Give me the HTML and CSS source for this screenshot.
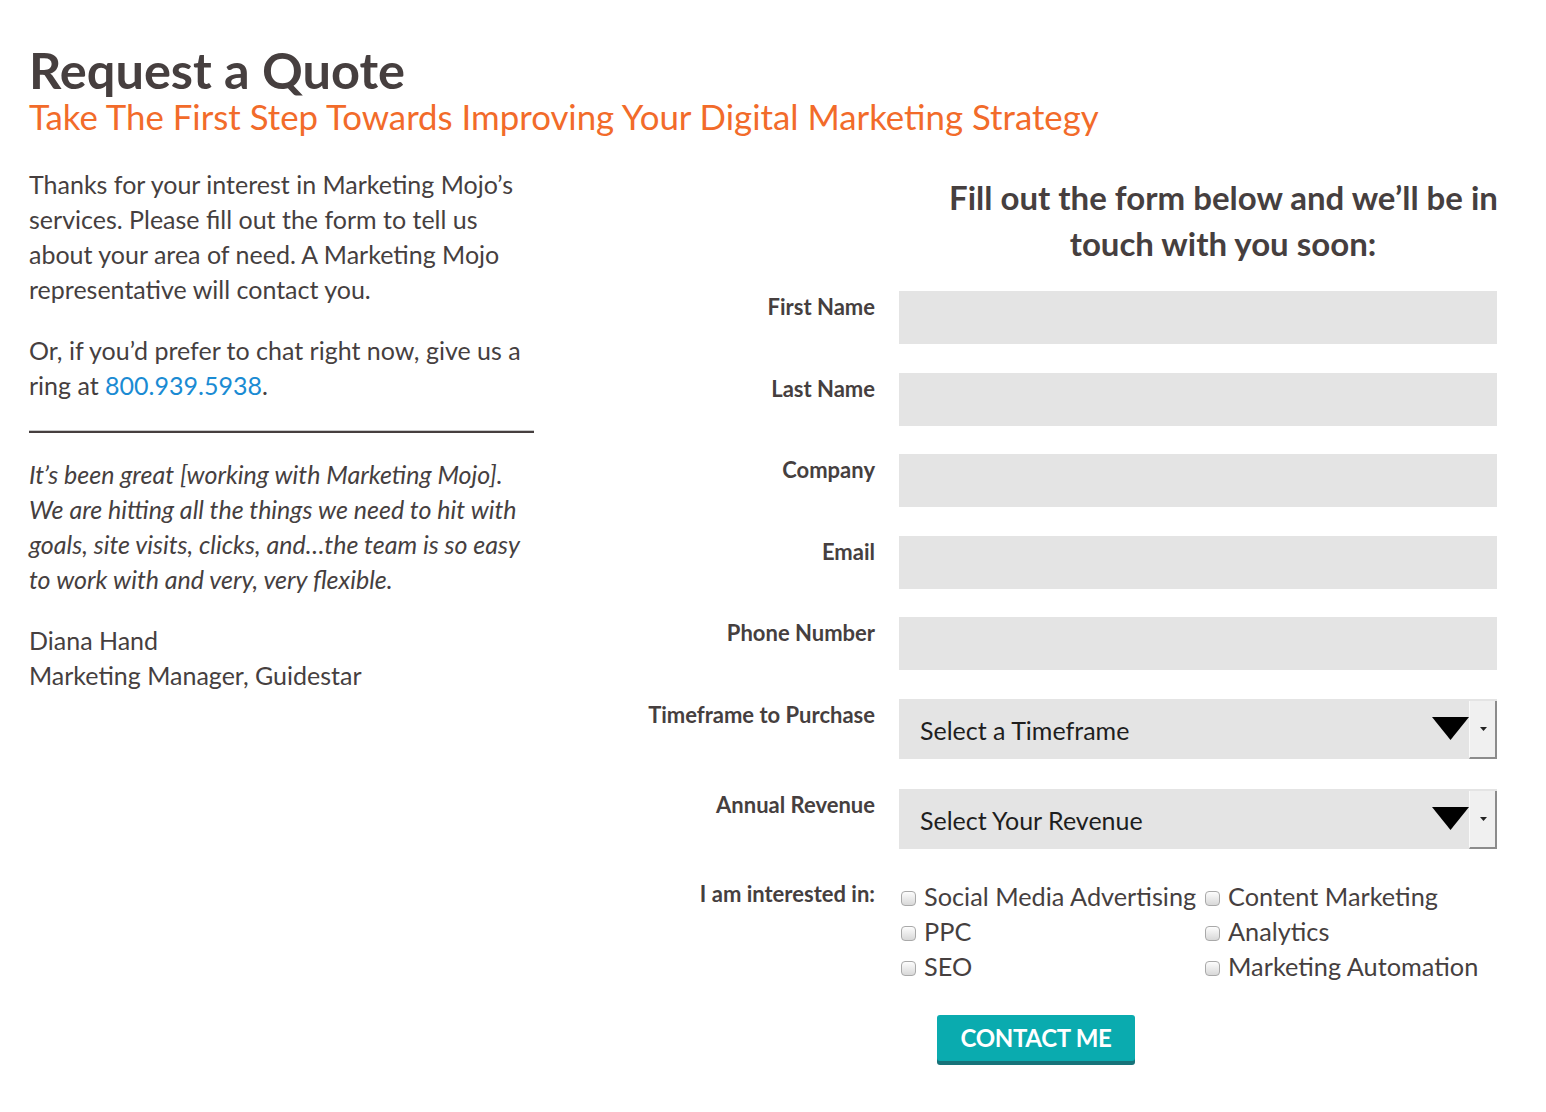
FILE: index.html
```html
<!DOCTYPE html>
<html lang="en">
<head>
<meta charset="utf-8">
<title>Request a Quote</title>
<link rel="stylesheet" href="styles.css">
</head>
<body>
<div class="page">
  <header class="head">
    <h1 class="title">Request a Quote</h1>
    <h2 class="subtitle">Take The First Step Towards Improving Your Digital Marketing Strategy</h2>
  </header>
  <div class="main">
    <aside class="intro">
      <p>Thanks for your interest in Marketing Mojo’s services. Please fill out the form to tell us about your area of need. A Marketing Mojo representative will contact you.</p>
      <p>Or, if you’d prefer to chat right now, give us a ring at <a class="phone" href="#">800.939.5938</a>.</p>
      <hr class="rule">
      <p class="quote">It’s been great [working with Marketing Mojo]. We are hitting all the things we need to hit with goals, site visits, clicks, and…the team is so easy to work with and very, very flexible.</p>
      <p>Diana Hand<br>Marketing Manager, Guidestar</p>
    </aside>
    <section class="formcol">
      <h3 class="form-title">Fill out the form below and we’ll be in<br>touch with you soon:</h3>
      <form class="form">
        <div class="row"><label class="lbl">First Name</label><input class="field" type="text"></div>
        <div class="row"><label class="lbl">Last Name</label><input class="field" type="text"></div>
        <div class="row"><label class="lbl">Company</label><input class="field" type="text"></div>
        <div class="row"><label class="lbl">Email</label><input class="field" type="text"></div>
        <div class="row"><label class="lbl">Phone Number</label><input class="field" type="text"></div>
        <div class="row row-sel"><label class="lbl">Timeframe to Purchase</label>
          <div class="select">
            <span class="sel-text">Select a Timeframe</span>
            <svg class="sel-arrow" width="37" height="23" viewBox="0 0 37 23"><polygon points="0,0 37,0 18.5,23" fill="#000"/></svg>
            <div class="sel-btn"><svg width="7" height="4" viewBox="0 0 7 4"><polygon points="0,0 7,0 3.5,4" fill="#222"/></svg></div>
          </div>
        </div>
        <div class="row row-sel"><label class="lbl">Annual Revenue</label>
          <div class="select">
            <span class="sel-text">Select Your Revenue</span>
            <svg class="sel-arrow" width="37" height="23" viewBox="0 0 37 23"><polygon points="0,0 37,0 18.5,23" fill="#000"/></svg>
            <div class="sel-btn"><svg width="7" height="4" viewBox="0 0 7 4"><polygon points="0,0 7,0 3.5,4" fill="#222"/></svg></div>
          </div>
        </div>
        <div class="row row-check"><label class="lbl">I am interested in:</label>
          <div class="checks">
            <label class="chk"><span class="box"></span>Social Media Advertising</label>
            <label class="chk"><span class="box"></span>Content Marketing</label>
            <label class="chk"><span class="box"></span>PPC</label>
            <label class="chk"><span class="box"></span>Analytics</label>
            <label class="chk"><span class="box"></span>SEO</label>
            <label class="chk"><span class="box"></span>Marketing Automation</label>
          </div>
        </div>
        <div class="row row-btn"><span></span><div><button class="btn" type="button">CONTACT ME</button></div></div>
      </form>
    </section>
  </div>
</div>
</body>
</html>
```

FILE: styles.css
```css
html, body {
  margin: 0;
  padding: 0;
  background: #ffffff;
}
body {
  font-family: Lato, "Open Sans", sans-serif;
  color: #463f3f;
}
.page {
  padding: 44px 49px 40px 29px;
}
.title {
  margin: 0;
  font-size: 50.5px;
  line-height: 52px;
  font-weight: 700;
  color: #463f3f;
}
.subtitle {
  margin: 2px 0 0;
  font-size: 34.8px;
  line-height: 38px;
  font-weight: 400;
  color: #f26b2a;
}
.main {
  display: flex;
  margin-top: 31px;
}
.intro {
  width: 505px;
  flex: none;
  font-size: 25px;
  line-height: 35px;
}
.intro p {
  margin: 0 0 26px;
}
.phone {
  color: #1a8bd3;
  text-decoration: none;
}
.rule {
  height: 0;
  border: 0;
  border-top: 1px solid #c8c8c8;
  border-bottom: 2px solid #463f3f;
  margin: 26.5px 0 24.5px;
}
.quote {
  font-style: italic;
}
.formcol {
  flex: 1;
  min-width: 0;
}
.form-title {
  margin: 7px 0 25px 415px;
  text-align: center;
  font-size: 33px;
  line-height: 46px;
  font-weight: 700;
  white-space: nowrap;
}
.form {
  margin: 0;
}
.row {
  display: grid;
  grid-template-columns: 1fr 598px;
  column-gap: 24px;
  margin-bottom: 28.6px;
}
.lbl {
  text-align: right;
  font-size: 22px;
  line-height: 25px;
  font-weight: 700;
  padding-top: 3px;
}
.field {
  display: block;
  width: 100%;
  height: 53px;
  box-sizing: border-box;
  border: 0;
  margin: 0;
  background: #e4e4e4;
}
.row-sel {
  margin-bottom: 30px;
}
.select {
  height: 60px;
  background: #e4e4e4;
  display: flex;
  align-items: center;
  padding-left: 21px;
}
.sel-text {
  flex: 1;
  font-size: 25px;
  color: #1e1e1e;
  padding-top: 3px;
}
.sel-arrow {
  display: block;
}
.sel-btn {
  align-self: flex-end;
  width: 28px;
  height: 58px;
  box-sizing: border-box;
  background: #f0f0f0;
  border-left: 1px solid #fafafa;
  border-right: 2px solid #8c8c8c;
  border-bottom: 2px solid #8c8c8c;
  display: flex;
  align-items: center;
  justify-content: center;
}
.sel-btn svg {
  display: block;
  margin-left: 2px;
}
.row-check {
  margin-bottom: 31px;
}
.row-check .lbl {
  padding-top: 2px;
}
.checks {
  display: grid;
  grid-template-columns: 304px 1fr;
  font-size: 25.3px;
  line-height: 35px;
}
.chk {
  display: flex;
  align-items: center;
  padding-left: 2px;
  white-space: nowrap;
}
.box {
  width: 15px;
  height: 15px;
  box-sizing: border-box;
  border: 1px solid #a9a9a9;
  border-radius: 4px;
  background: linear-gradient(#fdfdfd, #d8d8d8);
  margin-right: 8px;
  margin-top: 5px;
  flex: none;
}
.row-btn {
  margin-bottom: 0;
}
.btn {
  margin-left: 38px;
  width: 198px;
  height: 46px;
  border: 0;
  border-radius: 3px;
  background: #0aabaf;
  box-shadow: 0 4px 0 #17737a;
  color: #ffffff;
  font-family: Lato, sans-serif;
  font-weight: 700;
  font-size: 24px;
  letter-spacing: -0.3px;
  padding: 0;
}
```
